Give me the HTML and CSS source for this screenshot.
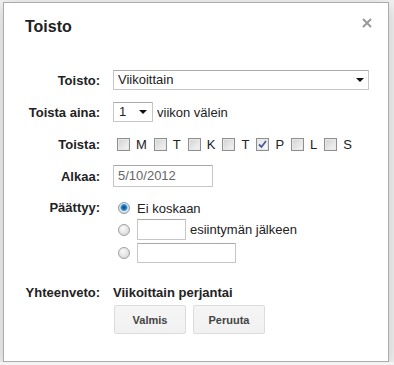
FILE: index.html
```html
<!DOCTYPE html>
<html lang="fi">
  <head>
    <meta charset="UTF-8" />
    <meta name="viewport" content="width=device-width, initial-scale=1.0" />
    <title>Toisto</title>
    <link rel="stylesheet" href="styles.css">
  </head>
  <body>
    <div class="dialog">
      <div class="dialog-head">
        <span class="dialog-title">Toisto</span>
        <span class="close">
          <svg width="10" height="10" viewBox="0 0 10 10">
            <path d="M1 1 L9 9 M9 1 L1 9" stroke="#999" stroke-width="2" />
          </svg>
        </span>
      </div>

      <div class="form">
        <div class="row">
          <div class="label">Toisto:</div>
          <div class="select select-wide">
            <span>Viikoittain</span><i class="arrow"></i>
          </div>
        </div>

        <div class="row row-gap">
          <div class="label">Toista aina:</div>
          <div class="select select-small">
            <span>1</span><i class="arrow"></i>
          </div>
          <span class="after">viikon välein</span>
        </div>

        <div class="row row-gap">
          <div class="label">Toista:</div>
          <div class="days">
            <span class="check"></span><span class="day">M</span>
            <span class="check"></span><span class="day">T</span>
            <span class="check"></span><span class="day">K</span>
            <span class="check"></span><span class="day">T</span>
            <span class="check checked">
              <svg width="11" height="11" viewBox="0 0 11 11">
                <path d="M2 5.5 L4.5 8 L9 2" fill="none" stroke="#4d5c9a" stroke-width="1.8" />
              </svg>
            </span><span class="day">P</span>
            <span class="check"></span><span class="day">L</span>
            <span class="check"></span><span class="day">S</span>
          </div>
        </div>

        <div class="row row-gap-sm">
          <div class="label">Alkaa:</div>
          <div class="input input-date">5/10/2012</div>
        </div>

        <div class="row row-top row-gap">
          <div class="label label-line">Päättyy:</div>
          <div class="ends">
            <div class="end-line">
              <span class="radio selected"></span>
              <span>Ei koskaan</span>
            </div>
            <div class="end-line end-line-2">
              <span class="radio"></span>
              <span class="input input-count"></span>
              <span class="after">esiintymän jälkeen</span>
            </div>
            <div class="end-line end-line-3">
              <span class="radio"></span>
              <span class="input input-until"></span>
            </div>
          </div>
        </div>

        <div class="row summary">
          <div class="label">Yhteenveto:</div>
          <div class="summary-text">Viikoittain perjantai</div>
        </div>

        <div class="buttons">
          <button class="btn">Valmis</button>
          <button class="btn">Peruuta</button>
        </div>
      </div>
    </div>
  </body>
</html>
```

FILE: styles.css
```css
body {
  margin: 0;
  background-color: #f3f3f3;
  font-family: Arial, "Liberation Sans", sans-serif;
  font-size: 13px;
  color: #222;
}
.dialog {
  width: 384px;
  height: 358px;
  margin: 2px 0 0 3px;
  background-color: #fff;
  border: 1px solid #acacac;
  box-shadow: 0 4px 16px rgba(0, 0, 0, 0.2);
}
.dialog-head {
  display: flex;
  justify-content: space-between;
  padding: 14px 16px 0 21px;
}
.dialog-title {
  font-size: 16px;
  font-weight: bold;
  line-height: 20px;
}
.close {
  width: 10px;
  height: 10px;
  margin-top: 1px;
}
.close svg {
  display: block;
}
.form {
  margin-top: 33px;
}
.row {
  display: flex;
  align-items: center;
}
.row-top {
  align-items: flex-start;
}
.row-gap {
  margin-top: 12px;
}
.row-gap-sm {
  margin-top: 11px;
}
.label {
  width: 96px;
  margin-right: 13px;
  text-align: right;
  font-weight: bold;
  flex-shrink: 0;
}
.label-line {
  line-height: 18px;
}
.select {
  position: relative;
  height: 20px;
  box-sizing: border-box;
  border: 1px solid #c6c6c6;
  border-top-color: #aaa;
  border-radius: 1px;
  line-height: 18px;
  padding-left: 4px;
  background-color: #fff;
}
.select-wide {
  width: 256px;
}
.select-small {
  width: 40px;
  padding-left: 5px;
}
.arrow {
  position: absolute;
  top: 7px;
  right: 4px;
  width: 0;
  height: 0;
  border-left: 4px solid transparent;
  border-right: 4px solid transparent;
  border-top: 4px solid #111;
}
.select-small .arrow {
  right: 5px;
}
.after {
  margin-left: 4px;
}
.days {
  display: flex;
  align-items: center;
  height: 20px;
}
.check {
  width: 13px;
  height: 13px;
  box-sizing: border-box;
  margin: 0 6px 0 4px;
  border: 1px solid #8f8f8f;
  background: linear-gradient(135deg, #d2d2d2, #f6f6f6);
  box-shadow: inset 0 0 0 1px #e8e8e8;
}
.check.checked {
  background: linear-gradient(135deg, #e4e4e4, #fafafa);
}
.check svg {
  display: block;
}
.day {
  margin-right: 3px;
}
.input {
  display: block;
  box-sizing: border-box;
  border: 1px solid #c6c6c6;
  border-top-color: #a8a8a8;
  border-radius: 1px;
  background-color: #fff;
}
.input-date {
  width: 100px;
  height: 22px;
  line-height: 20px;
  padding-left: 4px;
  color: #666;
}
.ends {
  display: flex;
  flex-direction: column;
}
.end-line {
  display: flex;
  align-items: center;
  height: 18px;
}
.end-line-2 {
  margin-top: 2px;
  height: 21px;
}
.end-line-3 {
  margin-top: 3px;
  height: 20px;
}
.radio {
  width: 12px;
  height: 12px;
  box-sizing: border-box;
  margin: 0 7px 0 5px;
  border-radius: 50%;
  border: 1px solid #a0a0a0;
  background: radial-gradient(circle at 40% 35%, #fafafa, #d0d0d0);
}
.radio.selected {
  border-color: #8a9aa8;
  background: radial-gradient(circle at 50% 45%, #0b3f6e 0, #1769b0 1.5px, #3f94d0 3px, #e6eef4 4px, #d4d8dc 5px);
}
.input-count {
  width: 49px;
  height: 21px;
}
.input-until {
  width: 99px;
  height: 20px;
}
.summary {
  margin-top: 21px;
  line-height: 18px;
}
.summary-text {
  font-weight: bold;
}
.buttons {
  display: flex;
  gap: 7px;
  margin: 3px 0 0 110px;
}
.btn {
  width: 72px;
  height: 29px;
  padding: 0;
  font-family: Arial, "Liberation Sans", sans-serif;
  font-size: 11px;
  font-weight: bold;
  color: #444;
  background: linear-gradient(#f5f5f5, #f1f1f1);
  border: 1px solid #dcdcdc;
  border-radius: 2px;
}
```
